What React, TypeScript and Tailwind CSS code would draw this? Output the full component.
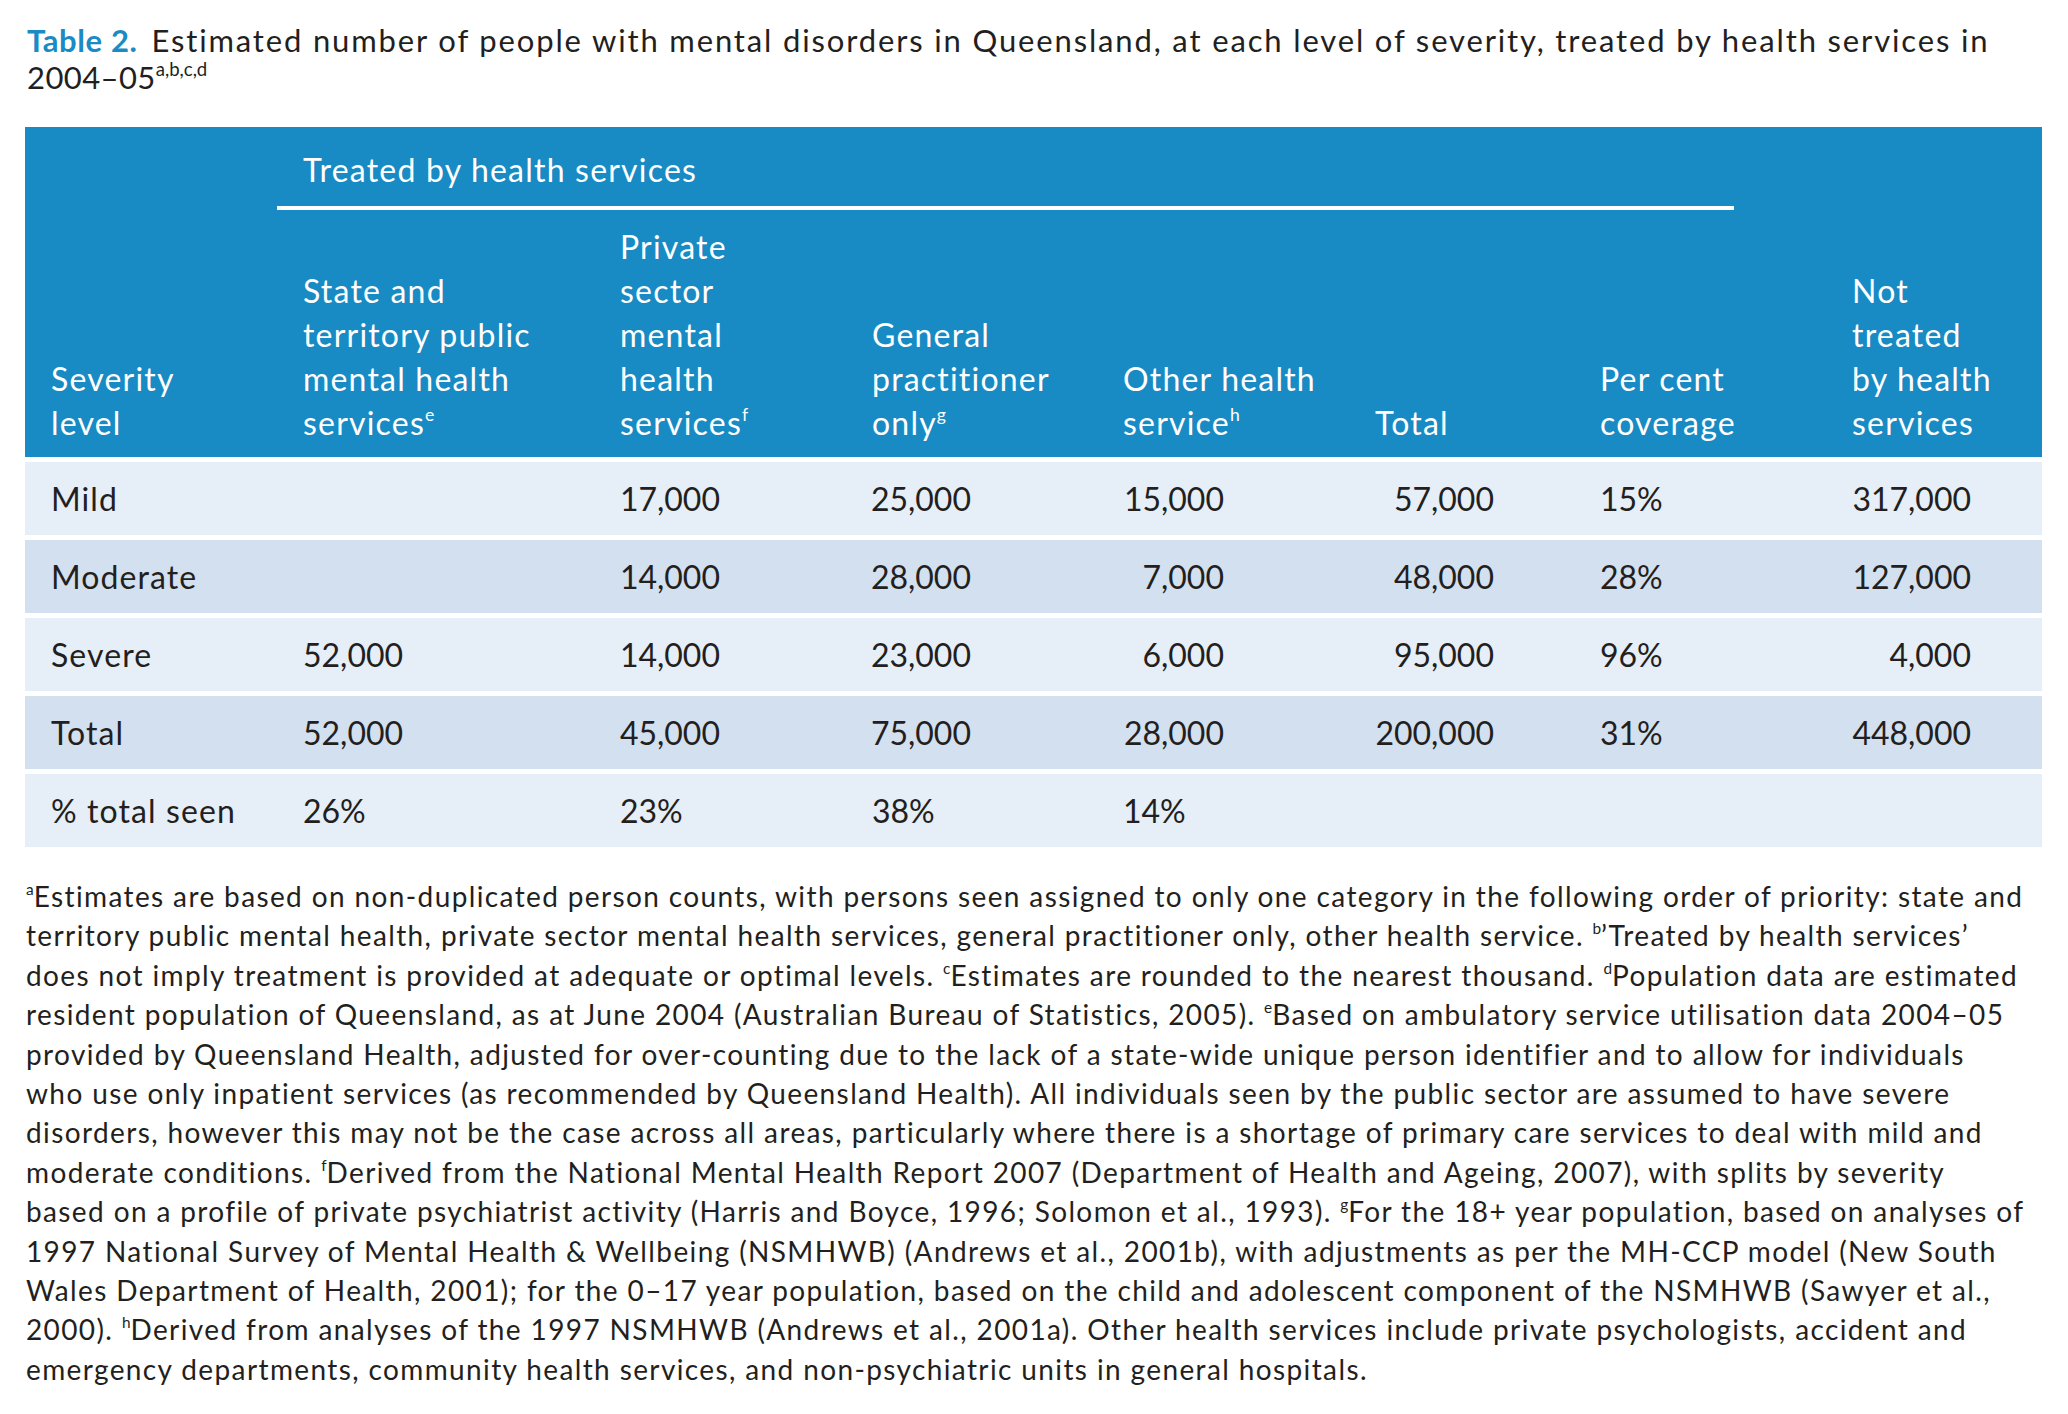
const cols = 'grid grid-cols-[252px_317px_252px_251px_252px_225px_252px_216px]';

// width of the box each number is right-aligned in, per column (0 = plain left)
const numBox = [0, 0, 100, 99, 101, 119, 0, 119];

const headers: { lines: string[]; sup?: string }[] = [
  { lines: ['Severity', 'level'] },
  { lines: ['State and', 'territory public', 'mental health', 'services'], sup: 'e' },
  { lines: ['Private', 'sector', 'mental', 'health', 'services'], sup: 'f' },
  { lines: ['General', 'practitioner', 'only'], sup: 'g' },
  { lines: ['Other health', 'service'], sup: 'h' },
  { lines: ['Total'] },
  { lines: ['Per cent', 'coverage'] },
  { lines: ['Not', 'treated', 'by health', 'services'] },
];

const rows = [
  ['Mild', '', '17,000', '25,000', '15,000', '57,000', '15%', '317,000'],
  ['Moderate', '', '14,000', '28,000', '7,000', '48,000', '28%', '127,000'],
  ['Severe', '52,000', '14,000', '23,000', '6,000', '95,000', '96%', '4,000'],
  ['Total', '52,000', '45,000', '75,000', '28,000', '200,000', '31%', '448,000'],
  ['% total seen', '26%', '23%', '38%', '14%', '', '', ''],
];

const Sup = ({ c }: { c: string }) => (
  <sup className="text-[0.55em] -top-[0.8em] tracking-normal">{c}</sup>
);

const notes: React.ReactNode[] = [
  <><Sup c="a" />Estimates are based on non-duplicated person counts, with persons seen assigned to only one category in the following order of priority: state and</>,
  <>territory public mental health, private sector mental health services, general practitioner only, other health service. <Sup c="b" />’Treated by health services’</>,
  <>does not imply treatment is provided at adequate or optimal levels. <Sup c="c" />Estimates are rounded to the nearest thousand. <Sup c="d" />Population data are estimated</>,
  <>resident population of Queensland, as at June 2004 (Australian Bureau of Statistics, 2005). <Sup c="e" />Based on ambulatory service utilisation data 2004–05</>,
  <>provided by Queensland Health, adjusted for over-counting due to the lack of a state-wide unique person identifier and to allow for individuals</>,
  <>who use only inpatient services (as recommended by Queensland Health). All individuals seen by the public sector are assumed to have severe</>,
  <>disorders, however this may not be the case across all areas, particularly where there is a shortage of primary care services to deal with mild and</>,
  <>moderate conditions. <Sup c="f" />Derived from the National Mental Health Report 2007 (Department of Health and Ageing, 2007), with splits by severity</>,
  <>based on a profile of private psychiatrist activity (Harris and Boyce, 1996; Solomon et al., 1993). <Sup c="g" />For the 18+ year population, based on analyses of</>,
  <>1997 National Survey of Mental Health &amp; Wellbeing (NSMHWB) (Andrews et al., 2001b), with adjustments as per the MH-CCP model (New South</>,
  <>Wales Department of Health, 2001); for the 0–17 year population, based on the child and adolescent component of the NSMHWB (Sawyer et al.,</>,
  <>2000). <Sup c="h" />Derived from analyses of the 1997 NSMHWB (Andrews et al., 2001a). Other health services include private psychologists, accident and</>,
  <>emergency departments, community health services, and non-psychiatric units in general hospitals.</>,
];

export default function App() {
  return (
    <div className="w-[2068px] h-[1414px] bg-white px-[25px] pt-[22px] text-[#231f20] font-['Lato',sans-serif]">
      {/* caption */}
      <div className="pl-[2px] text-[31px] leading-[37px] whitespace-nowrap">
        <span className="font-bold text-[#1a8bc4] tracking-[0.6px]">Table 2.</span>
        <span className="ml-[14px] tracking-[1.85px]">
          Estimated number of people with mental disorders in Queensland, at each level of severity, treated by health services in
        </span>
        <br />
        <span className="tracking-[0.4px]">2004–05</span>
        <sup className="text-[0.6em] -top-[0.7em]">a,b,c,d</sup>
      </div>

      {/* table */}
      <div className="mt-[31px] w-[2017px] flex flex-col gap-[5px] text-[32px]">
        <div className={`${cols} bg-[#188bc4] text-white leading-[44px] tracking-[1.2px]`}>
          <div />
          <div className="col-span-6 pt-[21px]">
            <div className="pl-[26px]">Treated by health services</div>
            <div className="mt-[14px] h-[4px] w-[1457px] bg-white" />
          </div>
          <div />
          {headers.map((h, i) => (
            <div key={i} className="self-end pl-[26px] pt-[15px] pb-[12px] whitespace-nowrap">
              {h.lines.map((l, j) => (
                <div key={j}>
                  {l}
                  {h.sup && j === h.lines.length - 1 && <Sup c={h.sup} />}
                </div>
              ))}
            </div>
          ))}
        </div>

        {rows.map((r, ri) => (
          <div
            key={ri}
            className={`${cols} h-[73px] items-center ${ri % 2 === 0 ? 'bg-[#e6eef7]' : 'bg-[#d3e0ef]'}`}
          >
            {r.map((v, ci) => (
              <div key={ci} className={`pl-[26px] whitespace-nowrap ${ci === 0 ? 'tracking-[1.1px]' : ''}`}>
                {numBox[ci] > 0 && !v.endsWith('%') ? (
                  <div className="flex justify-end" style={{ width: numBox[ci] }}>{v}</div>
                ) : (
                  v
                )}
              </div>
            ))}
          </div>
        ))}
      </div>

      {/* footnotes */}
      <div className="mt-[30px] pl-[1px] text-[28px] leading-[39.4px] tracking-[1.38px] whitespace-nowrap">
        {notes.map((n, i) => (
          <div key={i}>{n}</div>
        ))}
      </div>
    </div>
  );
}
